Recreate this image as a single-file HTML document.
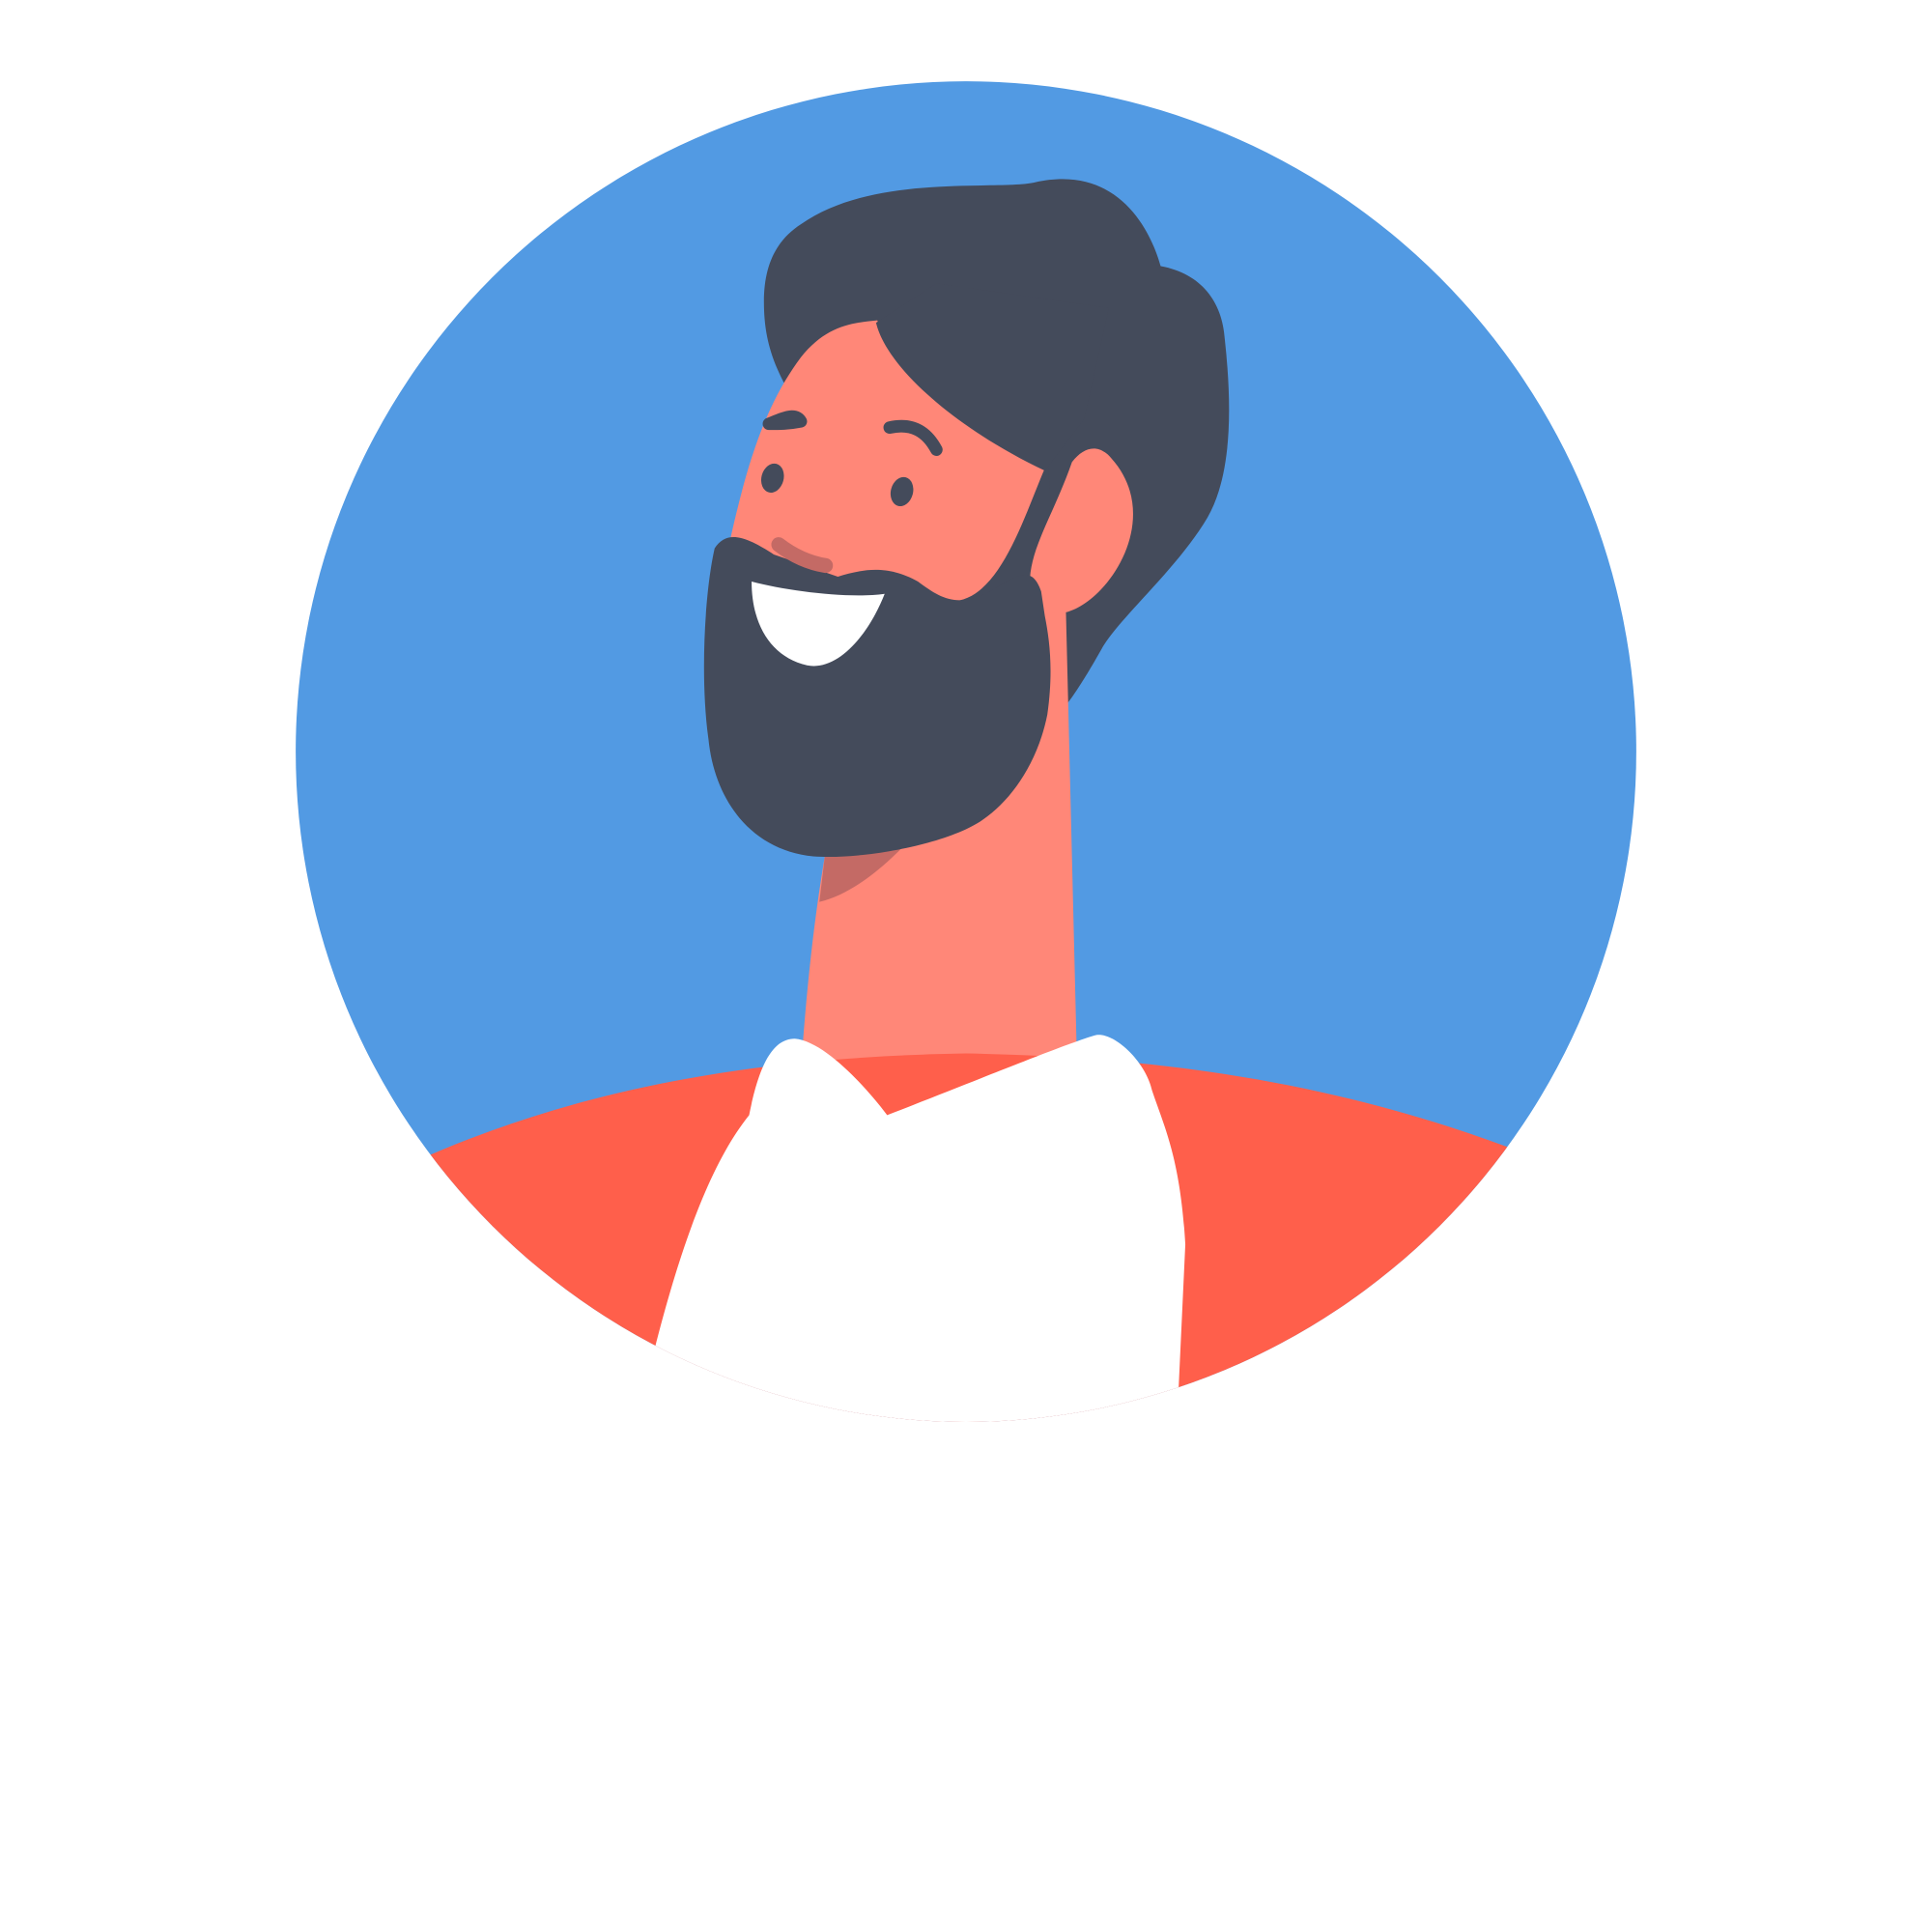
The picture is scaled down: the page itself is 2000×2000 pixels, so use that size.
<!DOCTYPE html>
<html><head><style>html,body{margin:0;padding:0;background:#fff}svg{display:block}</style></head>
<body>
<svg width="2000" height="2000" viewBox="0 0 1568 1568" xmlns="http://www.w3.org/2000/svg">
<defs><clipPath id="c"><circle cx="784" cy="610" r="544"/></clipPath></defs>
<circle cx="784" cy="610" r="544" fill="#529AE3"/>
<g clip-path="url(#c)">
<path d="M638 314 C625 290 620 270 620 245 C620 215 630 195 650 182 C710 140 810 155 840 148 C920 130 940 210 942 216 C975 222 992 245 994 275 C1000 330 1000 385 980 420 C955 462 910 500 895 525 C880 552 865 575 858 580 L840 500 Z" fill="#444B5B"/>
<path d="M760 492 L850 370 L860 510 Z" fill="#444B5B"/>
<path d="M648 900 C655 780 665 720 672 680 L838 490 L865 492 L875 900 Z" fill="#FF8778"/>
<path d="M300 960 C460 880 620 858 784 855 C950 858 1100 880 1260 945 L1400 1300 L200 1300 Z" fill="#FF5F4B"/>
<path d="M665 732 L670 690 L735 685 C715 706 690 726 665 732 Z" fill="#C46A65"/>
<path d="M590 450 C605 380 620 330 650 290 C670 265 690 262 712 260 C730 310 800 350 848 380 C830 422 810 490 770 488 C720 485 700 470 640 460 Z" fill="#FF8778"/>
<path d="M711 262 C720 300 780 350 848 382 L880 340 L900 250 L760 230 Z" fill="#444B5B"/>
<path d="M870 375 C880 362 892 360 902 372 C945 420 900 488 865 497 L862 498 C848 498 836 492 836 478 C835 465 838 452 845 435 C852 418 862 398 870 375 Z" fill="#FF8778"/>
<path d="M580 445 C590 430 605 435 628 450 L680 468 C700 462 720 458 745 472 C760 483 770 490 790 486 C815 478 835 450 845 480 L848 500 C852 520 855 545 850 580 C842 620 820 650 798 665 C770 685 700 698 660 695 C610 690 580 650 575 600 C568 550 572 480 580 445 Z" fill="#444B5B"/>
<path d="M610 472 C640 480 690 486 718 482 C705 515 680 545 655 540 C625 533 610 506 610 472 Z" fill="#fff"/>
<path d="M632 442 C645 452 658 457 670 459" stroke="#C46A65" stroke-width="12" stroke-linecap="round" fill="none"/>
<path d="M624 344 C634 340 645 334 650 342 C640 344 632 344 624 344" stroke="#444B5B" stroke-width="10" stroke-linecap="round" stroke-linejoin="round" fill="none"/>
<path d="M722 347 C740 343 752 350 760 365" stroke="#444B5B" stroke-width="10" stroke-linecap="round" fill="none"/>
<ellipse cx="627" cy="388" rx="9" ry="12" fill="#444B5B" transform="rotate(15 627 388)"/>
<ellipse cx="732" cy="399" rx="9" ry="12" fill="#444B5B" transform="rotate(15 732 399)"/>
<path d="M530 1100 C555 1000 580 940 608 905 C615 870 625 843 645 843 C670 845 705 885 720 905 C780 882 870 845 890 840 C905 838 930 862 935 885 C945 915 958 940 962 1010 L955 1160 L520 1160 Z" fill="#fff"/>
</g>
</svg>
</body></html>
